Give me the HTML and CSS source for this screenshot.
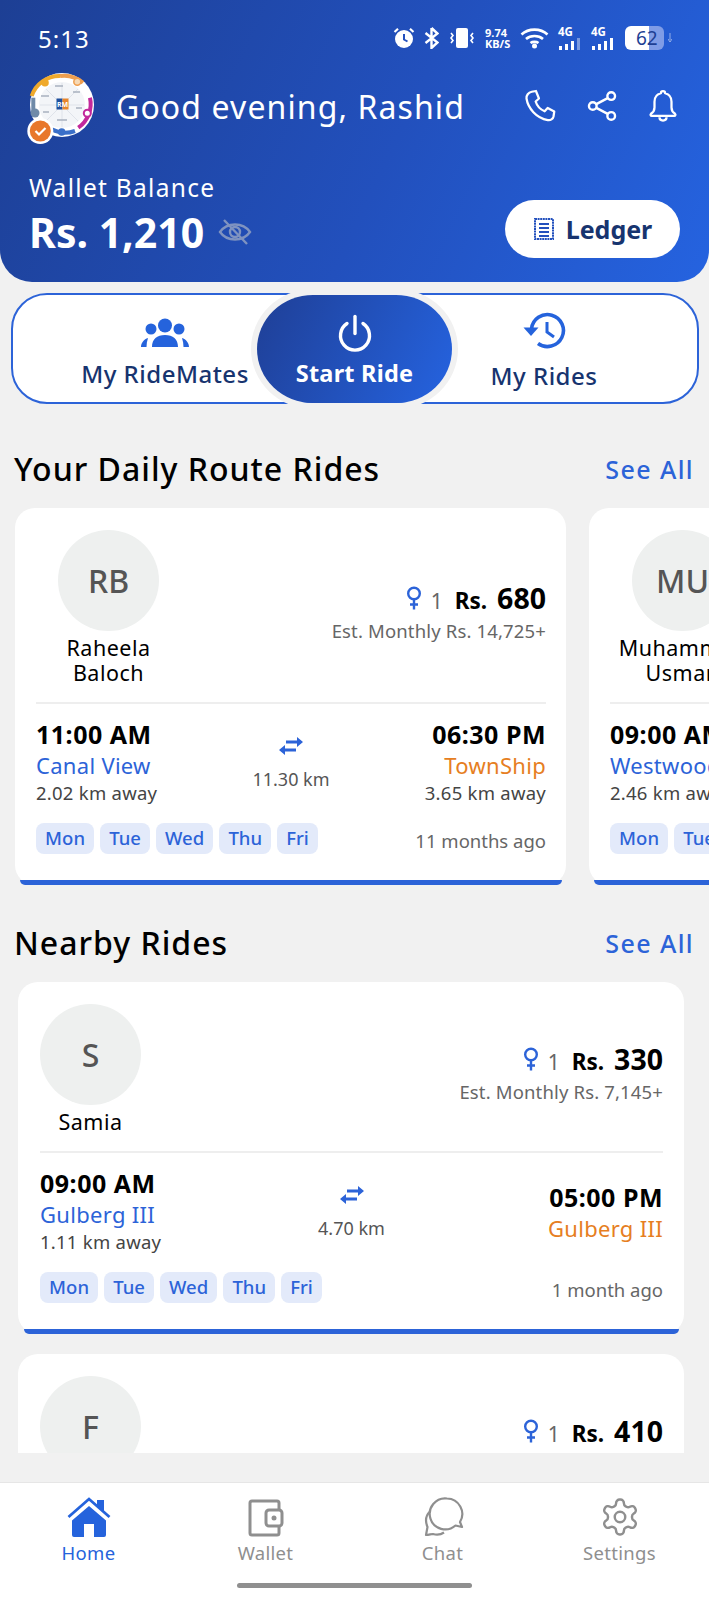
FILE: index.html
```html
<!DOCTYPE html>
<html lang="en">
<head>
  <meta charset="UTF-8" />
  <meta name="viewport" content="width=device-width, initial-scale=1.0" />
  <title>Home</title>
  <link rel="stylesheet" href="styles.css">
</head>
<body>
  <svg class="sprite">
    <symbol id="venus" viewBox="0 0 16 24">
      <circle cx="8" cy="7.500" r="5.800" fill="none" stroke="currentColor" stroke-width="2.400"/>
      <path d="M8 13v10.500M4 18.500h8" fill="none" stroke="currentColor" stroke-width="2.400"/>
    </symbol>
    <symbol id="swap" viewBox="0 0 26 20">
      <path d="M8 4.500h11V1l6 5-6 5V7.500H8z" fill="currentColor"/>
      <path d="M18 12.500H7V9l-6 5 6 5v-3.500h11z" fill="currentColor"/>
    </symbol>
  </svg>

  <header class="top">
    <div class="status">
      <span class="clock">5:13</span>
      <div class="status-icons">
        <svg width="22" height="22" viewBox="0 0 22 22"><circle cx="11" cy="12" r="9" fill="#fff"/><path d="M11 7v5.500l3.500 2" fill="none" stroke="#2350bd" stroke-width="2"/><path d="M1.500 5 5 1.800M20.500 5 17 1.800" stroke="#fff" stroke-width="2.200"/></svg>
        <svg width="15" height="22" viewBox="0 0 15 22"><path d="M7.500 1v20l6-5.500-12-9.500M7.500 1l6 5.500-12 9.500" fill="none" stroke="#fff" stroke-width="2.400"/></svg>
        <svg width="28" height="22" viewBox="0 0 28 22"><rect x="8" y="1" width="12" height="20" rx="2" fill="#fff"/><path d="M3 6l2 2.500-2 2.500 2 2.500-2 2.500M25 6l-2 2.500 2 2.500-2 2.500 2 2.500" fill="none" stroke="#fff" stroke-width="1.600"/></svg>
        <div class="speed"><span>9.74</span><span>KB/S</span></div>
        <svg width="29" height="22" viewBox="0 0 29 22"><path d="M1.500 7.500C8.500 1 20.500 1 27.500 7.500M6 12c4.500-4 12.500-4 17 0M10.500 16c2-1.500 6-1.500 8 0" fill="none" stroke="#fff" stroke-width="2.600"/><circle cx="14.500" cy="19" r="2.500" fill="#fff"/></svg>
        <div class="signal"><span>4G</span><svg width="22" height="12" viewBox="0 0 22 12"><path d="M1 8h3v4H1zM7 6h3v6H7zM13 3h3v9h-3z" fill="#fff"/><path d="M19 0h3v12h-3z" fill="#fff" opacity=".4"/></svg></div>
        <div class="signal"><span>4G</span><svg width="22" height="12" viewBox="0 0 22 12"><path d="M1 8h3v4H1zM7 6h3v6H7zM13 3h3v9h-3zM19 0h3v12h-3z" fill="#fff"/></svg></div>
        <div class="battery"><span>62</span></div>
        <svg class="charge" width="4" height="10" viewBox="0 0 4 10"><path d="M2 0v7M0 6l2 3 2-3" fill="none" stroke="#fff" stroke-width="1" opacity=".5"/></svg>
      </div>
    </div>

    <div class="greet-row">
      <svg class="logo" width="68" height="68" viewBox="0 0 68 68">
        <circle cx="33" cy="33" r="32" fill="#fff"/>
        <circle cx="33" cy="33" r="23" fill="#f3f5f8"/>
        <path d="M33 11v44M11 33h44M17 17l32 32M49 17 17 49" stroke="#dfe3ea" stroke-width="1"/>
        <path d="M12 24h8M44 20h7M47 36h6M14 40h6M28 48h10M26 14h8" stroke="#a9b1bf" stroke-width="1.500"/>
        <path d="M2.700 24A29 29 0 0 1 31 4" fill="none" stroke="#efa92b" stroke-width="4"/>
        <path d="M31 4a29 29 0 0 1 23 6.700" fill="none" stroke="#ef9f50" stroke-width="4"/>
        <path d="M61 25.700a29 29 0 0 1-11.700 30" fill="none" stroke="#c2289b" stroke-width="4"/>
        <path d="M46 59a29 29 0 0 1-23.300-1.700" fill="none" stroke="#3a6fc9" stroke-width="4"/>
        <path d="M4.300 25.700v15" fill="none" stroke="#6f8aa8" stroke-width="4"/>
        <rect x="27.500" y="26.500" width="6" height="11" fill="#1f4f9c"/>
        <rect x="33.500" y="26.500" width="6" height="11" fill="#e8862c"/>
        <text x="33.500" y="35" class="logo-text" text-anchor="middle">RM</text>
        <circle cx="16" cy="10.700" r="3.800" fill="#efa92b"/>
        <circle cx="48.300" cy="9.700" r="3.500" fill="#f6d9b5" stroke="#ef9f50" stroke-width="1.500"/>
        <circle cx="58.300" cy="41.300" r="3.500" fill="#fff" stroke="#c2289b" stroke-width="2"/>
        <circle cx="32.700" cy="60" r="3.800" fill="#3a6fc9"/>
        <circle cx="6" cy="41" r="4.500" fill="#6f8aa8"/>
        <circle cx="11.300" cy="59" r="13" fill="#fff"/>
        <circle cx="11.300" cy="59" r="10.500" fill="#e8772a"/>
        <path d="M6.500 59l3.500 3.500 6.500-6.500" fill="none" stroke="#fff" stroke-width="2.200"/>
      </svg>
      <h1 class="greeting">Good evening, Rashid</h1>
      <div class="top-actions">
        <svg width="36" height="36" viewBox="0 0 24 24" fill="none" stroke="#fff" stroke-width="1.500" stroke-linecap="round" stroke-linejoin="round"><path d="M6.500 2.500l2.800-.5 2 5-2.200 2c.8 2.600 3.300 5.400 6 6.500l2-2.200 4.400 2.400-.5 3.300c-.3 1.600-2 2.800-3.800 2.400C9.500 20 4 13.500 3 7c-.3-2 1.300-4 3.500-4.500z"/></svg>
        <svg width="34" height="34" viewBox="0 0 24 24" fill="none" stroke="#fff" stroke-width="1.700"><circle cx="18.500" cy="5" r="2.700"/><circle cx="5.500" cy="12" r="2.700"/><circle cx="18.500" cy="19" r="2.700"/><path d="M8 10.700l8-4.300M8 13.300l8 4.300"/></svg>
        <svg width="34" height="36" viewBox="0 0 24 24" fill="none" stroke="#fff" stroke-width="1.600" stroke-linejoin="round"><path d="M12 1.500c-.9 0-1.500.6-1.500 1.500-3 .7-4.500 3-4.500 6v4c0 2-1 3.500-2.500 4.500-.6.500-.2 1.500.5 1.500h16c.7 0 1.100-1 .5-1.500-1.500-1-2.500-2.500-2.500-4.500V9c0-3-1.500-5.300-4.500-6 0-.9-.6-1.500-1.500-1.500z"/><path d="M9.500 20c0 3 5 3 5 0"/></svg>
      </div>
    </div>

    <div class="wallet-row">
      <div>
        <p class="wallet-label">Wallet Balance</p>
        <div class="wallet-amount">
          <strong>Rs. 1,210</strong>
          <svg width="34" height="30" viewBox="0 0 34 30" fill="none" stroke="#7f93c0" stroke-width="2.400"><path d="M2 15C9 5 25 5 32 15 25 25 9 25 2 15z"/><circle cx="17" cy="15" r="5"/><path d="M6 3l23 24"/></svg>
        </div>
      </div>
      <button class="ledger">
        <svg width="22" height="24" viewBox="0 0 22 24" fill="none" stroke="#2350bd" stroke-width="2"><rect x="2" y="2" width="18" height="20" stroke-dasharray="2 .6"/><path d="M6 7h10M6 11h10M6 15h10M6 19h10"/></svg>
        Ledger
      </button>
    </div>
  </header>

  <nav class="tabs">
    <a class="tab tab-left">
      <svg width="48" height="30" viewBox="0 0 48 30" fill="#2563dc"><circle cx="24" cy="7.500" r="7"/><circle cx="10" cy="11" r="5.500"/><circle cx="38" cy="11" r="5.500"/><path d="M11 29c0-8 5-12 13-12s13 4 13 12zM0 29c0-4 3-8 7-9-1 3-1.500 6-1.500 9zM48 29c0-4-3-8-7-9 1 3 1.500 6 1.500 9z"/></svg>
      <span>My RideMates</span>
    </a>
    <a class="start">
      <svg width="36" height="38" viewBox="0 0 36 38" fill="none" stroke="#fff" stroke-width="3.400" stroke-linecap="round"><path d="M18 2.500v17"/><path d="M10 9.500a14.500 14.500 0 1 0 16 0"/></svg>
      <span>Start Ride</span>
    </a>
    <a class="tab tab-right">
      <svg width="44" height="38" viewBox="0 0 44 38" fill="none" stroke="#2563dc" stroke-width="3.600"><path d="M9.500 17A16 16 0 1 1 16 31.500"/><path d="M1.500 15.500h15L9 24z" fill="#2563dc" stroke="none"/><path d="M25 10v10l7 5" stroke-width="3"/></svg>
      <span>My Rides</span>
    </a>
  </nav>

  <main class="scroll">
    <div class="section-head">
      <h2>Your Daily Route Rides</h2>
      <a class="see-all">See All</a>
    </div>
    <div class="daily-row">
      <article class="card card-daily">
        <div class="card-top">
          <div class="person">
            <div class="initials">RB</div>
            <p class="name">Raheela<br>Baloch</p>
          </div>
          <div class="fare">
            <div class="fare-line">
              <svg class="venus" width="16" height="24"><use href="#venus"/></svg>
              <span class="seats">1</span>
              <span class="rs">Rs.</span>
              <span class="price">680</span>
            </div>
            <p class="monthly">Est. Monthly Rs. 14,725+</p>
          </div>
        </div>
        <div class="route">
          <div class="stop">
            <p class="time">11:00 AM</p>
            <p class="place from">Canal View</p>
            <p class="away">2.02 km away</p>
          </div>
          <div class="mid">
            <svg class="swap" width="26" height="20"><use href="#swap"/></svg>
            <p class="dist">11.30 km</p>
          </div>
          <div class="stop stop-end">
            <p class="time">06:30 PM</p>
            <p class="place to">TownShip</p>
            <p class="away">3.65 km away</p>
          </div>
        </div>
        <div class="card-foot">
          <div class="days"><span>Mon</span><span>Tue</span><span>Wed</span><span>Thu</span><span>Fri</span></div>
          <span class="ago">11 months ago</span>
        </div>
        <div class="card-bar"></div>
      </article>

      <article class="card card-daily">
        <div class="card-top">
          <div class="person">
            <div class="initials">MU</div>
            <p class="name">Muhammad<br>Usman</p>
          </div>
        </div>
        <div class="route">
          <div class="stop">
            <p class="time">09:00 AM</p>
            <p class="place from">Westwood</p>
            <p class="away">2.46 km away</p>
          </div>
        </div>
        <div class="card-foot">
          <div class="days"><span>Mon</span><span>Tue</span><span>Wed</span></div>
        </div>
        <div class="card-bar"></div>
      </article>
    </div>

    <div class="section-head section-near">
      <h2>Nearby Rides</h2>
      <a class="see-all">See All</a>
    </div>
    <div class="near-list">
      <article class="card">
        <div class="card-top">
          <div class="person">
            <div class="initials">S</div>
            <p class="name">Samia</p>
          </div>
          <div class="fare">
            <div class="fare-line">
              <svg class="venus" width="16" height="24"><use href="#venus"/></svg>
              <span class="seats">1</span>
              <span class="rs">Rs.</span>
              <span class="price">330</span>
            </div>
            <p class="monthly">Est. Monthly Rs. 7,145+</p>
          </div>
        </div>
        <div class="route">
          <div class="stop">
            <p class="time">09:00 AM</p>
            <p class="place from">Gulberg III</p>
            <p class="away">1.11 km away</p>
          </div>
          <div class="mid">
            <svg class="swap" width="26" height="20"><use href="#swap"/></svg>
            <p class="dist">4.70 km</p>
          </div>
          <div class="stop stop-end">
            <p class="time">05:00 PM</p>
            <p class="place to">Gulberg III</p>
          </div>
        </div>
        <div class="card-foot">
          <div class="days"><span>Mon</span><span>Tue</span><span>Wed</span><span>Thu</span><span>Fri</span></div>
          <span class="ago">1 month ago</span>
        </div>
        <div class="card-bar"></div>
      </article>

      <article class="card">
        <div class="card-top">
          <div class="person">
            <div class="initials">F</div>
            <p class="name">Fatima</p>
          </div>
          <div class="fare">
            <div class="fare-line">
              <svg class="venus" width="16" height="24"><use href="#venus"/></svg>
              <span class="seats">1</span>
              <span class="rs">Rs.</span>
              <span class="price">410</span>
            </div>
            <p class="monthly">Est. Monthly Rs. 8,855+</p>
          </div>
        </div>
      </article>
    </div>
  </main>

  <footer class="bottom-nav">
    <div class="nav-items">
      <a class="nav-item active">
        <svg width="44" height="42" viewBox="0 0 44 42"><path d="M1.500 21 22 3l20.500 18" fill="none" stroke="#2563dc" stroke-width="2.800"/><path d="M30 4h7v12l-7-6z" fill="#2563dc"/><path d="M22 10l17 14.500V39a2 2 0 0 1-2 2H27V28H17v13H7a2 2 0 0 1-2-2V24.500z" fill="#2563dc"/></svg>
        <span>Home</span>
      </a>
      <a class="nav-item">
        <svg width="40" height="42" viewBox="0 0 40 42" fill="none" stroke="#8f8f8f" stroke-width="3"><path d="M33 14V7a2 2 0 0 0-2-2H6a2 2 0 0 0-2 2v30a2 2 0 0 0 2 2h25a2 2 0 0 0 2-2v-7"/><rect x="20" y="14" width="16" height="16" rx="3"/><circle cx="28" cy="22" r="2.500" fill="#8f8f8f" stroke="none"/></svg>
        <span>Wallet</span>
      </a>
      <a class="nav-item">
        <svg width="42" height="42" viewBox="0 0 42 42" fill="none" stroke="#8f8f8f" stroke-width="2.200" stroke-linejoin="round"><path d="M25 2.500a15.500 15.500 0 0 1 13 23.500l2 5-6.500-1.500A15.500 15.500 0 1 1 25 2.500z"/><path d="M8.500 15C4 19 3 25 5.500 31L4 39c3 0 5-1 7-1 4 1 8 .5 11-1.500"/></svg>
        <span>Chat</span>
      </a>
      <a class="nav-item">
        <svg width="42" height="42" viewBox="0 0 24 24" fill="none" stroke="#8f8f8f" stroke-width="1.400"><path d="M12.220 2h-.44a2 2 0 0 0-2 2v.18a2 2 0 0 1-1 1.730l-.43.250a2 2 0 0 1-2 0l-.15-.08a2 2 0 0 0-2.730.730l-.22.380a2 2 0 0 0 .73 2.730l.15.100a2 2 0 0 1 1 1.720v.510a2 2 0 0 1-1 1.740l-.15.090a2 2 0 0 0-.73 2.730l.22.380a2 2 0 0 0 2.730.730l.15-.08a2 2 0 0 1 2 0l.43.250a2 2 0 0 1 1 1.730V20a2 2 0 0 0 2 2h.44a2 2 0 0 0 2-2v-.18a2 2 0 0 1 1-1.730l.43-.25a2 2 0 0 1 2 0l.15.080a2 2 0 0 0 2.730-.730l.22-.39a2 2 0 0 0-.73-2.730l-.15-.08a2 2 0 0 1-1-1.740v-.5a2 2 0 0 1 1-1.740l.15-.09a2 2 0 0 0 .73-2.730l-.22-.38a2 2 0 0 0-2.730-.73l-.15.080a2 2 0 0 1-2 0l-.43-.25a2 2 0 0 1-1-1.730V4a2 2 0 0 0-2-2z"/><circle cx="12" cy="12" r="3"/></svg>
        <span>Settings</span>
      </a>
    </div>
    <div class="home-bar"></div>
  </footer>
</body>
</html>
```

FILE: styles.css
```css
* { box-sizing: border-box; }
html, body { margin: 0; padding: 0; }
body {
  width: 709px;
  height: 1600px;
  overflow: hidden;
  background: #f1f1f1;
  font-family: "Noto Sans", Arial, sans-serif;
  color: #000;
}
p, h1, h2 { margin: 0; font-weight: 400; }
.sprite { position: absolute; width: 0; height: 0; }

/* header */
.top {
  height: 282px;
  padding: 0 29px;
  color: #fff;
  background: linear-gradient(115deg, #1d3f94 0%, #2250bd 55%, #2563e0 100%);
  border-radius: 0 0 32px 32px;
}
.status {
  height: 76px;
  padding: 24px 0 0 9px;
  display: flex;
  justify-content: space-between;
}
.clock { font-size: 24px; line-height: 29px; letter-spacing: 1px; }
.status-icons {
  height: 28px;
  display: flex;
  align-items: center;
  gap: 9px;
  margin-right: 8px;
}
.speed {
  display: flex;
  flex-direction: column;
  font-size: 11px;
  line-height: 11px;
  font-weight: 700;
  width: 26px;
}
.signal {
  display: flex;
  flex-direction: column;
  width: 24px;
  font-size: 11.500px;
  line-height: 12px;
  font-weight: 700;
}
.battery {
  width: 39px;
  height: 24px;
  margin-left: 1px;
  padding-left: 11px;
  border-radius: 6px;
  background: linear-gradient(90deg, #fff 62%, #7f9ce6 62%);
  color: #1d3f94;
  font-size: 19px;
  line-height: 24px;
}
.charge { margin-left: -5px; }
.greet-row {
  height: 68px;
  margin-top: -4px;
  display: flex;
  align-items: center;
}
.logo { flex: none; overflow: visible; }
.logo-text { font-size: 7px; font-weight: 700; fill: #fff; }
.greeting {
  flex: 1;
  margin: 2px 0 0 19px;
  font-size: 32px;
  line-height: 40px;
  letter-spacing: 1.100px;
}
.top-actions {
  display: flex;
  align-items: center;
  gap: 27px;
  margin-right: 0;
}
.wallet-row {
  margin-top: 32px;
  display: flex;
  justify-content: space-between;
  align-items: center;
}
.wallet-label { font-size: 24.500px; line-height: 30px; letter-spacing: 1.300px; }
.wallet-amount {
  margin-top: 4px;
  display: flex;
  align-items: center;
  gap: 14px;
  height: 50px;
}
.wallet-amount strong { font-size: 41px; line-height: 50px; font-weight: 700; }
.ledger {
  width: 175px;
  height: 58px;
  margin: 28px 0 0;
  display: flex;
  align-items: center;
  justify-content: center;
  gap: 11px;
  background: #fff;
  border: none;
  border-radius: 29px;
  color: #17346f;
  font-family: inherit;
  font-size: 25px;
  font-weight: 700;
}

/* ride tabs */
.tabs {
  height: 111px;
  margin: 11px 10px 0 11px;
  display: flex;
  background: #fff;
  border: 2.500px solid #2c63d8;
  border-radius: 36px;
}
.tab {
  flex: 1;
  display: flex;
  flex-direction: column;
  align-items: center;
  padding-top: 17px;
  gap: 10px;
  color: #17346f;
  font-size: 24px;
  font-weight: 500;
  letter-spacing: .5px;
  line-height: 32px;
}
.tab-left { padding-left: 60px; padding-top: 23px; }
.tab-right { padding-right: 61px; }
.start {
  width: 195px;
  margin-bottom: -1px;
  display: flex;
  flex-direction: column;
  align-items: center;
  padding-top: 19px;
  gap: 5px;
  color: #fff;
  font-size: 23.500px;
  font-weight: 700;
  letter-spacing: .2px;
  line-height: 32px;
  background: linear-gradient(115deg, #1f3f96 0%, #2563e0 100%);
  border-radius: 56px / 54px;
  box-shadow: 0 0 0 6px #f1f1f1;
}

/* scrolling content */
.scroll {
  height: 1049px;
  overflow: hidden;
  padding-top: 45px;
}
.section-head {
  height: 40px;
  padding: 0 15px 0 14px;
  display: flex;
  justify-content: space-between;
  align-items: center;
}
.section-head h2 { font-size: 32px; font-weight: 500; line-height: 40px; letter-spacing: 1px; }
.see-all { font-size: 25px; font-weight: 500; color: #2c63d8; letter-spacing: 1.400px; }
.section-near { margin-top: 38px; }
.daily-row {
  margin-top: 19px;
  padding-left: 15px;
  display: flex;
  gap: 23px;
}
.near-list {
  margin-top: 19px;
  padding: 0 25px 0 18px;
  display: flex;
  flex-direction: column;
  gap: 20px;
}
.card {
  padding: 22px 21px 0 22px;
  background: #fff;
  border-radius: 20px;
}
.card-daily { flex: none; width: 551px; padding: 22px 20px 0 21px; }
.card-top {
  display: flex;
  justify-content: space-between;
  align-items: center;
  padding-bottom: 17px;
  border-bottom: 2px solid #eeeeee;
}
.person { width: 101px; display: flex; flex-direction: column; align-items: center; }
.card-daily .person { margin-left: 22px; }
.initials {
  width: 101px;
  height: 101px;
  border-radius: 50%;
  background: #eef0ef;
  color: #555;
  font-size: 32px;
  font-weight: 500;
  line-height: 101px;
  text-align: center;
}
.name {
  margin-top: 4px;
  font-size: 21.500px;
  line-height: 25px;
  letter-spacing: .5px;
  text-align: center;
  white-space: nowrap;
}
.fare { display: flex; flex-direction: column; align-items: flex-end; margin-top: 6px; }
.fare-line { display: flex; align-items: baseline; height: 32px; }
.venus { color: #2c63d8; align-self: center; margin: 6px 9px 0 0; }
.seats { font-size: 21px; color: #666; margin-right: 12px; }
.rs { font-size: 22.500px; font-weight: 700; margin-right: 10px; }
.price { font-size: 28.500px; font-weight: 700; }
.monthly { margin-top: 8px; font-size: 18.500px; line-height: 24px; letter-spacing: .15px; color: #666; }
.route {
  padding-top: 17px;
  display: grid;
  grid-template-columns: 1fr auto 1fr;
  align-items: center;
}
.stop-end { text-align: right; }
.time { font-size: 25px; font-weight: 700; line-height: 26px; letter-spacing: .5px; }
.place { margin-top: 5px; font-size: 22px; line-height: 26px; letter-spacing: .3px; }
.from { color: #2c63d8; }
.to { color: #e67e22; }
.away { margin-top: 3px; font-size: 18.500px; line-height: 24px; letter-spacing: .25px; color: #444; }
.mid { display: flex; flex-direction: column; align-items: center; }
.swap { color: #2c63d8; }
.dist { margin-top: 11px; font-size: 18px; line-height: 24px; color: #555; }
.card-foot {
  margin-top: 18px;
  display: flex;
  justify-content: space-between;
  align-items: center;
}
.days { display: flex; gap: 6px; }
.days span {
  height: 31px;
  padding: 0 9.100px;
  background: #e3eafa;
  border-radius: 8px;
  color: #2c63d8;
  font-size: 18.500px;
  font-weight: 500;
  line-height: 30px;
}
.ago { margin-top: 3px; font-size: 18.500px; color: #666; }
.card-bar {
  height: 5px;
  margin: 26px -16px 0;
  background: #2c63d8;
  border-radius: 0 0 16px 16px;
}

/* bottom nav */
.bottom-nav {
  height: 118px;
  margin-top: 29px;
  background: #fff;
  border-top: 1px solid #e6e6e6;
}
.nav-items { display: grid; grid-template-columns: repeat(4, 177px); padding-top: 13px; }
.nav-item {
  display: flex;
  flex-direction: column;
  align-items: center;
  gap: 2px;
  color: #8f8f8f;
  font-size: 18.500px;
  letter-spacing: .3px;
  line-height: 25px;
}
.active { color: #2563dc; }
.home-bar {
  width: 235px;
  height: 5px;
  margin: 18px auto 0;
  border-radius: 3px;
  background: #8f8f8f;
}
```
